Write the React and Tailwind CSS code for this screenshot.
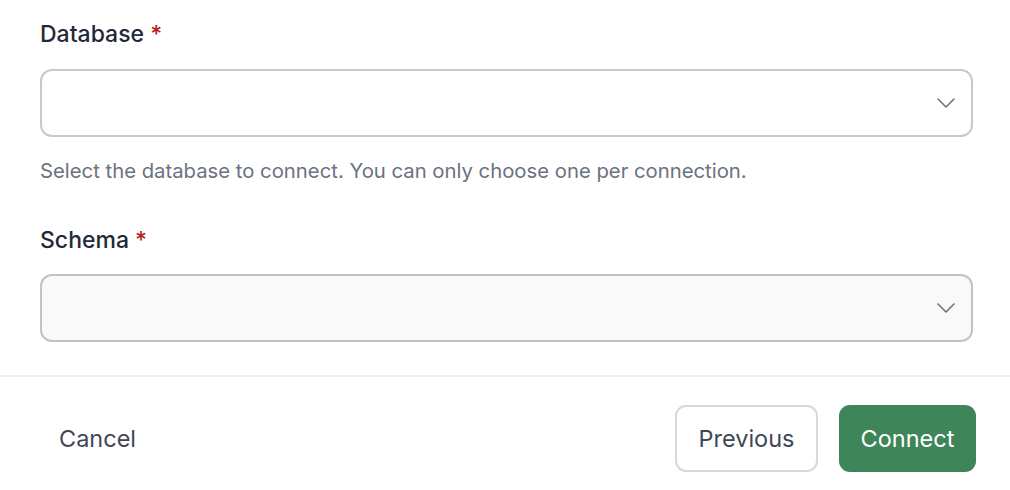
import React from "react";

const Chevron = () => (
  <svg width="20" height="12" viewBox="0 0 20 12" fill="none" stroke="#6b7280" strokeWidth="1.6" strokeLinecap="round" strokeLinejoin="round">
    <path d="M2 2l8 8 8-8" />
  </svg>
);

const SelectBox = ({ disabled }) => (
  <button
    type="button"
    className={
      disabled
        ? "flex h-[68px] w-full items-center justify-end rounded-[12px] border-2 border-[#c2c2c2] bg-[#f9f9f9] pr-[15px]"
        : "flex h-[68px] w-full items-center justify-end rounded-[12px] border-2 border-[#c9c9c9] bg-white pr-[15px]"
    }
  >
    <Chevron />
  </button>
);

export default function App() {
  return (
    <div className="h-[490px] w-[1010px] bg-white font-['Inter',sans-serif] antialiased">
      <div className="pl-[40px] pr-[37px] pt-[19px]">
        <label className="block text-[23px] leading-[30px] font-medium text-[#1f2937]">
          Database <span className="text-[#b91c1c]">*</span>
        </label>
        <div className="mt-[20px]">
          <SelectBox />
        </div>
        <p className="mt-[21px] text-[20.3px] leading-[26px] text-[#6b7280]">
          Select the database to connect. You can only choose one per connection.
        </p>
        <label className="mt-[41px] block text-[23px] leading-[30px] font-medium text-[#1f2937]">
          Schema <span className="text-[#b91c1c]">*</span>
        </label>
        <div className="mt-[19px]">
          <SelectBox disabled />
        </div>
      </div>
      <div className="mt-[33px] border-t-2 border-[#efeff2]" />
      <div className="flex items-center justify-between pl-[40px] pr-[34px] pt-[28px]">
        <button type="button" className="h-[67px] px-[19px] text-[23.5px] font-normal text-[#3f4756]">
          Cancel
        </button>
        <div className="flex gap-[21px]">
          <button type="button" className="h-[67px] w-[143px] rounded-[11px] border-2 border-[#d5d8de] bg-white text-[23.5px] font-normal text-[#3f4756]">
            Previous
          </button>
          <button type="button" className="h-[67px] w-[137px] rounded-[11px] bg-[#3f855a] text-[23.5px] font-normal text-white">
            Connect
          </button>
        </div>
      </div>
    </div>
  );
}
